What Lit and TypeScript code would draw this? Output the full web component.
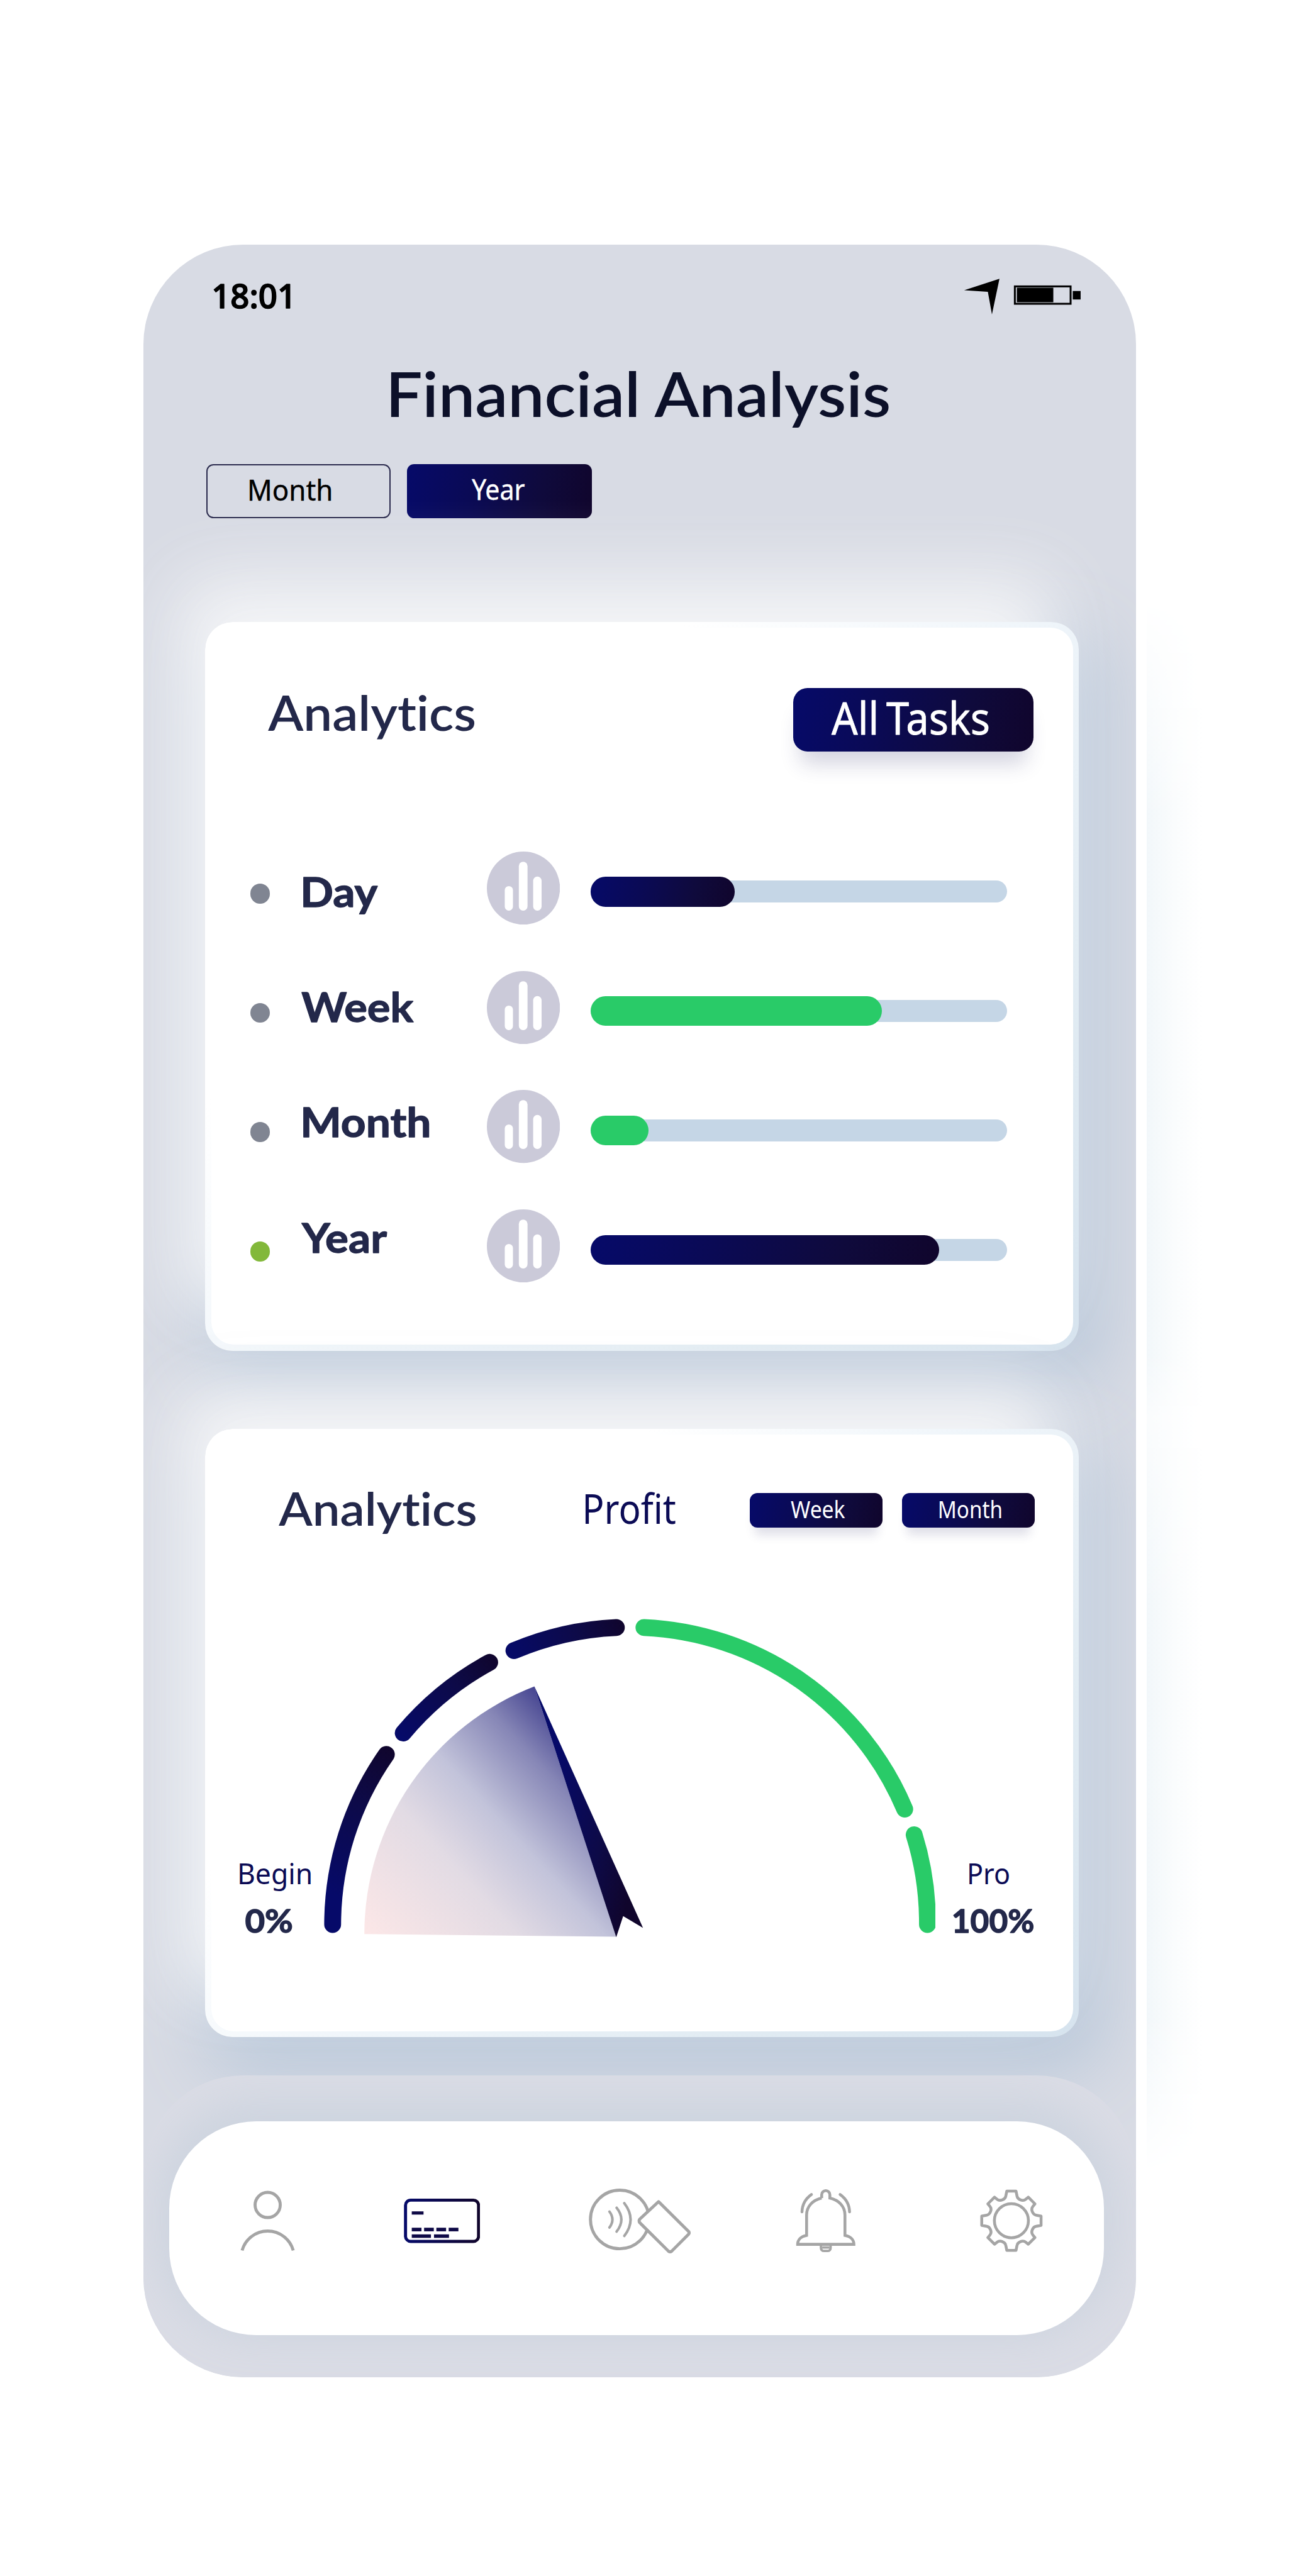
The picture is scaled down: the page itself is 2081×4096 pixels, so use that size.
import { LitElement, html, css, svg, unsafeCSS } from "lit";
import { customElement, property } from "lit/decorators.js";

// Design units are converted to window pixels with one scale.
const SCALE = 0.8131;
const u = (n: number) => unsafeCSS(`${(n * SCALE).toFixed(2)}px`);

const NAVY = css`linear-gradient(100deg, #060a69 0%, #0a0a55 35%, #0f0a3c 72%, #10052c 100%)`;

// One line of text whose box is its cap height, fitted to a given width.
@customElement("fit-label")
class FitLabel extends LitElement {
  @property({ type: Number }) w = 100;
  @property({ type: Number }) cap = 40;
  @property({ type: Number }) lead = 0;
  @property({ type: Number }) trail = 0;
  @property({ type: Number }) ink = 0;
  @property() text = "";
  @property() face = "lato";
  @property({ type: Number }) weight = 400;

  static styles = css`
    :host { display: block; flex: none; }
    svg { display: block; overflow: visible; }
    text { fill: currentColor; stroke: currentColor; stroke-linejoin: round; font-variant-ligatures: none; }
    .lato { font-family: Lato, "Open Sans", sans-serif; }
    .noto { font-family: "Noto Sans", "Open Sans", sans-serif; word-spacing: -0.08em; }
  `;

  render() {
    const ratio = this.face === "lato" ? 0.72 : 0.714;
    return html`<svg width=${this.w * SCALE} height=${this.cap * SCALE} viewBox="0 0 ${this.w} ${this.cap}">
      <text class=${this.face} x=${-this.lead} y=${this.cap} font-size=${this.cap / ratio} font-weight=${this.weight}
        stroke-width=${this.ink} textLength=${this.w + this.lead + this.trail} lengthAdjust="spacingAndGlyphs">${this.text}</text>
    </svg>`;
  }
}

const ROWS = [
  { name: "Day", x: 4, w: 143, lead: 7, trail: 1, fill: 281, tone: "navy", on: false },
  { name: "Week", x: 0, w: 218, lead: 1, trail: 0, fill: 569, tone: "green", on: false },
  { name: "Month", x: 4, w: 244, lead: 7, trail: 5, fill: 113, tone: "green", on: false },
  { name: "Year", x: 0, w: 165, lead: 0, trail: 1, fill: 681, tone: "navy", on: true },
];

@customElement("period-list")
class PeriodList extends LitElement {
  static styles = css`
    :host { display: flex; align-items: flex-start; }
    .col { display: flex; flex-direction: column; flex: none; }
    .dots { padding-top: ${u(63)}; gap: ${u(194.4)}; width: ${u(101)}; }
    .dot { width: ${u(39)}; height: ${u(39)}; border-radius: 50%; background: #808592; }
    .dot.on { background: #82b83a; }
    .names { padding-top: ${u(50.5)}; gap: ${u(167.5)}; width: ${u(362)}; color: #23284a; }
    .name { display: flex; }
    .icons { gap: ${u(90.4)}; width: ${u(203)}; }
    .icons svg { display: block; width: ${u(143)}; height: ${u(143)}; }
    .bars { padding-top: ${u(50)}; gap: ${u(175.4)}; }
    .bar { display: flex; align-items: center; width: ${u(814)}; height: ${u(58)}; }
    .track { flex: 1; height: ${u(43)}; border-radius: ${u(21.5)}; background: #c5d6e6; display: flex; align-items: center; }
    .fill { height: ${u(58)}; border-radius: ${u(29)}; flex: none; }
    .navy { background: ${NAVY}; }
    .green { background: #29cb68; }
  `;

  render() {
    return html`
      <div class="col dots">${ROWS.map((r) => html`<span class="dot ${r.on ? "on" : ""}"></span>`)}</div>
      <div class="col names">
        ${ROWS.map((r) => html`<div class="name" style="padding-left:${r.x * SCALE}px">
          <fit-label text=${r.name} w=${r.w} cap="58" lead=${r.lead} trail=${r.trail} weight="700" ink="1.6"></fit-label></div>`)}
      </div>
      <div class="col icons">
        ${ROWS.map(() => html`<svg viewBox="0 0 143 143">
          <circle cx="71.5" cy="71.5" r="71.5" fill="#cbcad9"></circle>
          <g fill="#fff">
            <rect x="35" y="67.5" width="16" height="48" rx="8"></rect>
            <rect x="62.5" y="20" width="17" height="95.5" rx="8.5"></rect>
            <rect x="90.5" y="49" width="16.5" height="66.5" rx="8.2"></rect>
          </g></svg>`)}
      </div>
      <div class="col bars">
        ${ROWS.map((r) => html`<div class="bar"><div class="track">
          <div class="fill ${r.tone}" style="width:${r.fill * SCALE}px"></div></div></div>`)}
      </div>`;
  }
}

@customElement("profit-gauge")
class ProfitGauge extends LitElement {
  static styles = css`
    :host { display: flex; align-items: flex-end; }
    .end { flex: none; display: flex; flex-direction: column; align-items: center; gap: ${u(50)}; color: #23284a; }
    .left { width: ${u(139)}; align-items: flex-start; padding-bottom: ${u(10)}; }
    .right { width: ${u(156)}; align-items: flex-start; padding-bottom: ${u(10)}; }
    .cap { color: #0b0b55; }
    .left .value { padding-left: ${u(13)}; }
    .right .cap { padding-left: ${u(30)}; }
    svg { display: block; flex: none; width: ${u(1196)}; height: ${u(625)}; margin: 0 ${u(36)} 0 ${u(26)}; }
  `;

  render() {
    const arcs = [
      { d: "M649 3763A581.7 581.7 0 0 1 754 3430.5", s: "url(#a1)" },
      { d: "M787 3388.6A581.7 581.7 0 0 1 956 3250.4", s: "url(#a2)" },
      { d: "M1003.5 3227.5A581.7 581.7 0 0 1 1203.7 3182.2", s: "url(#a3)" },
      { d: "M1257.7 3182.2A581.7 581.7 0 0 1 1767.5 3537.4", s: "#29cb68" },
      { d: "M1786 3587.6A581.7 581.7 0 0 1 1812 3763", s: "#29cb68" },
    ];
    const grads = [
      ["a1", 640, 3700, 775, 3420],
      ["a2", 780, 3395, 972, 3240],
      ["a3", 990, 3235, 1220, 3170],
      ["nd", 1060, 3560, 1250, 3600],
    ];
    return html`
      <div class="end left">
        <fit-label class="cap" text="Begin" w="139" cap="40" lead="5" trail="4" face="noto"></fit-label>
        <fit-label class="value" text="0%" w="90" cap="45" lead="2" trail="2" weight="700" ink="1.6"></fit-label>
      </div>
      <svg viewBox="632 3164 1196 625">
        <defs>
          ${grads.map(([id, x1, y1, x2, y2]) => svg`<linearGradient id=${id} gradientUnits="userSpaceOnUse" x1=${x1} y1=${y1} x2=${x2} y2=${y2}>
            <stop offset="0" stop-color="#060a69"></stop><stop offset=".6" stop-color="#0d0a48"></stop><stop offset="1" stop-color="#10052c"></stop></linearGradient>`)}
          <linearGradient id="fan" gradientUnits="userSpaceOnUse" x1="711" y1="3781" x2="1133" y2="3391">
            <stop offset="0" stop-color="#fce7e7"></stop>
            <stop offset=".38" stop-color="#e2dbe4"></stop>
            <stop offset=".6" stop-color="#c2c3da"></stop>
            <stop offset=".83" stop-color="#8686b6"></stop>
            <stop offset="1" stop-color="#444390"></stop>
          </linearGradient>
        </defs>
        <g fill="none" stroke-width="33" stroke-linecap="round">
          ${arcs.map((a) => svg`<path d=${a.d} stroke=${a.s}></path>`)}
        </g>
        <path d="M711 3781.6A518 518 0 0 1 1043.5 3297.5L1203.5 3787Z" fill="url(#fan)"></path>
        <path d="M1043.5 3297.5L1255.8 3769.6L1217 3746.6L1203.5 3788Z" fill="url(#nd)"></path>
      </svg>
      <div class="end right">
        <fit-label class="cap" text="Pro" w="77" cap="40" lead="5" trail="3" face="noto"></fit-label>
        <fit-label class="value" text="100%" w="156" cap="45" lead="4" trail="2" weight="700" ink="1.6"></fit-label>
      </div>`;
  }
}

const gearPath = (() => {
  const quarter: [string, number[][]][] = [
    ["L", [[9, -58]]],
    ["L", [[11, -48]]],
    ["C", [[12, -42], [22, -37], [28, -42]]],
    ["L", [[33, -46]]],
    ["L", [[46, -33]]],
    ["L", [[42, -28]]],
    ["C", [[37, -22], [42, -12], [48, -11]]],
    ["L", [[58, -9]]],
  ];
  let d = "M-9 -58";
  for (let q = 0; q < 4; q++) {
    for (const [c, pts] of quarter) {
      d += c + pts.map(([x, y]) => {
        for (let i = 0; i < q; i++) [x, y] = [-y, x];
        return `${x} ${y}`;
      }).join(" ");
    }
  }
  return d + "Z";
})();

@customElement("tab-bar")
class TabBar extends LitElement {
  static styles = css`
    :host { display: flex; align-items: center; box-sizing: border-box;
      height: ${u(418.5)}; border-radius: ${u(170)}; background: #fff;
      padding: 0 0 ${u(31)} ${u(136)}; box-shadow: 0 ${u(-18)} ${u(80)} ${u(22)} #cdd4df; }
    svg { display: block; flex: none; height: ${u(130)}; fill: none; stroke: #a5a5a5; stroke-width: 6; }
    .person { width: ${u(112)}; }
    .card { width: ${u(149)}; margin-left: ${u(210)}; }
    .pay { width: ${u(200)}; margin-left: ${u(213)}; }
    .bell { width: ${u(120)}; margin-left: ${u(203)}; }
    .gear { width: ${u(125)}; margin-left: ${u(241)}; }
  `;

  render() {
    const dashes = [
      [804.5, 4324, 23, 6.3], [804.5, 4356, 19, 7], [828.6, 4356, 19, 7], [852.6, 4356, 19, 7],
      [876.7, 4356, 19, 7], [804.5, 4369, 37.5, 6.8], [848, 4369, 29.3, 6.8],
    ];
    return html`
      <svg class="person" viewBox="467 4277 112 130">
        <circle cx="523" cy="4311.5" r="24.6"></circle><path d="M473 4400.5A51.9 51.9 0 0 1 573 4400.5"></path>
      </svg>
      <svg class="card" viewBox="789 4277 149 130">
        <defs><linearGradient id="cg"><stop offset="0" stop-color="#060a69"></stop><stop offset="1" stop-color="#10052c"></stop></linearGradient></defs>
        <rect x="792.3" y="4302" width="142.8" height="80.8" rx="10" stroke="url(#cg)"></rect>
        <g fill="#0e0946" stroke="none">${dashes.map(([x, y, w, h]) => svg`<rect x=${x} y=${y} width=${w} height=${h}></rect>`)}</g>
      </svg>
      <svg class="pay" viewBox="1151 4277 200 130">
        <circle cx="1211.6" cy="4339.8" r="57.3"></circle>
        <path d="M1287.5 4305L1250.5 4339.5Q1248.5 4343 1250.5 4346L1307 4402Q1310 4404 1313 4402L1346 4369Q1348.5 4366 1346 4363Z" fill="#fff" stroke-linejoin="round"></path>
        <path d="M1191.5 4324.5Q1203 4340 1191.5 4355.5M1205.5 4317Q1224 4340 1205.5 4363.5M1220.5 4308Q1245 4340 1220.5 4372" stroke-width="5" stroke-linecap="round"></path>
      </svg>
      <svg class="bell" viewBox="1554 4277 120 130">
        <path d="M1606 4298V4291.5A8 8 0 0 1 1622 4291.5V4298C1640 4302 1651.5 4315 1651.5 4331V4371C1663 4373 1669 4380 1669 4388.5H1559C1559 4380 1565 4373 1576.5 4371V4331C1576.5 4315 1588 4302 1606 4298" stroke-width="5.6"></path>
        <path d="M1604.5 4390V4395Q1604.5 4401.5 1611 4401.5H1617Q1623.5 4401.5 1623.5 4395V4390M1607 4394.5H1621" stroke-width="4.6"></path>
        <path d="M1586 4291Q1568 4304 1567.5 4325M1642 4291Q1660 4304 1660.5 4325" stroke-width="5.6" stroke-linecap="round"></path>
      </svg>
      <svg class="gear" viewBox="1915 4277 125 130">
        <g transform="translate(1977.6 4342.3)" stroke-linejoin="round"><path d=${gearPath} stroke-width="5.6"></path><circle r="33.3" stroke-width="5.6"></circle></g>
      </svg>`;
  }
}

@customElement("app-root")
class AppRoot extends LitElement {
  static styles = css`
    :host { display: block; background: #fff; width: 2081px; height: 4096px; overflow: hidden; }
    .stage { display: flex; align-items: flex-start; padding: ${u(479)} 0 0 ${u(281)}; }
    .phone { box-sizing: border-box; flex: none; display: flex; flex-direction: column; width: ${u(1940)}; height: ${u(4170)};
      border-radius: ${u(195)}; background: #d8dbe4; overflow: hidden; }
    .halo { flex: none; width: ${u(110)}; height: ${u(3080)}; margin: ${u(690)} 0 0 ${u(21)};
      background: linear-gradient(90deg, #f2f7fa, #fafcfd 50%, #fff);
      mask-image: linear-gradient(transparent, #000 14%, #000 48%, rgba(0, 0, 0, 0.4) 52%, #000 64%, #000 90%, transparent); }
    .status { display: flex; justify-content: space-between; align-items: flex-start; padding: ${u(63)} ${u(107)} 0 ${u(138)}; height: ${u(76)}; color: #000; }
    .time { padding-top: ${u(15)}; }
    .sys { display: block; width: ${u(230)}; height: ${u(76)}; }
    .title { padding: ${u(110)} 0 0 ${u(483)}; color: #0c1029; }
    .range { display: flex; gap: ${u(32)}; padding: ${u(92.5)} 0 0 ${u(122)}; }
    .chip { box-sizing: border-box; width: ${u(361)}; height: ${u(106)}; border-radius: ${u(14)}; display: flex; align-items: flex-start; }
    .chip.line { border: ${u(2.5)} solid #2b2b4e; padding: ${u(29.5)} 0 0 ${u(83)}; color: #000; }
    .navy { background: ${NAVY}; color: #fff; }
    .chip.navy { padding: ${u(30.5)} 0 0 ${u(127)}; }
    .card { box-sizing: border-box; flex: none; width: ${u(1708)}; margin-left: ${u(120.5)}; padding: ${u(11.5)}; border-radius: ${u(54)};
      background: linear-gradient(135deg, #fff 0%, #fff 30%, #eff5fa 52%, #e2ecf3 75%, #d6e3ee 100%);
      box-shadow: ${u(-50)} ${u(-80)} ${u(140)} rgba(248, 248, 249, 0.95), ${u(24)} ${u(48)} ${u(140)} ${u(24)} #b9c8da; }
    .first { margin-top: ${u(203)}; height: ${u(1425)}; }
    .second { margin-top: ${u(153)}; height: ${u(1189)}; }
    .face { box-sizing: border-box; height: 100%; border-radius: ${u(44)}; background: #fff; }
    .head { display: flex; align-items: flex-start; color: #23284a; }
    .first .head { justify-content: space-between; padding: ${u(118)} ${u(77)} 0 ${u(112)}; }
    .first .word { padding-top: ${u(15.5)}; }
    .all { box-sizing: border-box; width: ${u(470)}; height: ${u(123.5)}; border-radius: ${u(28)}; padding: ${u(29)} 0 0 ${u(75)};
      box-shadow: 0 ${u(38)} ${u(40)} ${u(-14)} rgba(40, 40, 100, 0.2); }
    period-list { padding: ${u(195.5)} 0 0 ${u(76)}; }
    .second .head { padding: ${u(112)} 0 0 ${u(133)}; height: ${u(70)}; }
    .profit { padding: ${u(6)} ${u(145)} 0 ${u(215)}; color: #0b0b55; }
    .pill { box-sizing: border-box; flex: none; width: ${u(259)}; height: ${u(68)}; border-radius: ${u(15)}; margin: ${u(1.5)} ${u(39)} 0 0;
      box-shadow: 0 ${u(24)} ${u(20)} ${u(-10)} rgba(40, 40, 100, 0.15); padding: ${u(15)} 0 0 ${u(80)}; }
    .pill + .pill { padding-left: ${u(73.5)}; margin-right: 0; }
    profit-gauge { padding: ${u(176)} 0 0 ${u(55)}; }
    .dock { flex: none; margin-top: ${u(75)}; height: ${u(590)}; border-radius: ${u(195)}; box-sizing: border-box; padding: ${u(90)} ${u(62)} 0 ${u(50)};
      background: #dadce5; overflow: hidden; position: relative; }
  `;

  render() {
    return html`<div class="stage">
      <main class="phone">
        <div class="status">
          <fit-label class="time" text="18:01" w="151" cap="46" lead="6" trail="9" face="noto" weight="500" ink="2"></fit-label>
          <svg class="sys" viewBox="1884 542 230 76">
            <path d="M1885 567.3L1954 544.7L1939.3 614.7L1931.3 570.3Z"></path>
            <rect x="1984.1" y="559.7" width="109" height="34" fill="none" stroke="#000" stroke-width="3.7"></rect>
            <rect x="1988" y="562.3" width="71.3" height="28.4"></rect>
            <rect x="2097.3" y="568.7" width="15.4" height="16.6"></rect>
          </svg>
        </div>
        <fit-label class="title" text="Financial Analysis" w="974" cap="87" lead="10" trail="4" weight="600"></fit-label>
        <div class="range">
          <div class="chip line"><fit-label text="Month" w="159" cap="39.5" lead="5" trail="4" face="noto" ink="0.5"></fit-label></div>
          <div class="chip navy"><fit-label text="Year" w="104" cap="39.5" face="noto" ink="0.5"></fit-label></div>
        </div>
        <section class="card first"><div class="face">
          <div class="head">
            <fit-label class="word" text="Analytics" w="403" cap="68" lead="1" trail="3" weight="600"></fit-label>
            <div class="all navy"><fit-label text="All Tasks" w="307" cap="62" trail="3" face="noto" ink="1"></fit-label></div>
          </div>
          <period-list></period-list>
        </div></section>
        <section class="card second"><div class="face">
          <div class="head">
            <fit-label text="Analytics" w="384" cap="64.7" lead="1" trail="3" weight="600"></fit-label>
            <fit-label class="profit" text="Profit" w="176" cap="57" lead="7" trail="1" face="noto"></fit-label>
            <div class="pill navy"><fit-label text="Week" w="106.5" cap="34" face="noto"></fit-label></div>
            <div class="pill navy"><fit-label text="Month" w="120" cap="34" lead="4" trail="3" face="noto"></fit-label></div>
          </div>
          <profit-gauge></profit-gauge>
        </div></section>
        <div class="dock"><tab-bar></tab-bar></div>
      </main>
      <div class="halo"></div>
    </div>`;
  }
}
